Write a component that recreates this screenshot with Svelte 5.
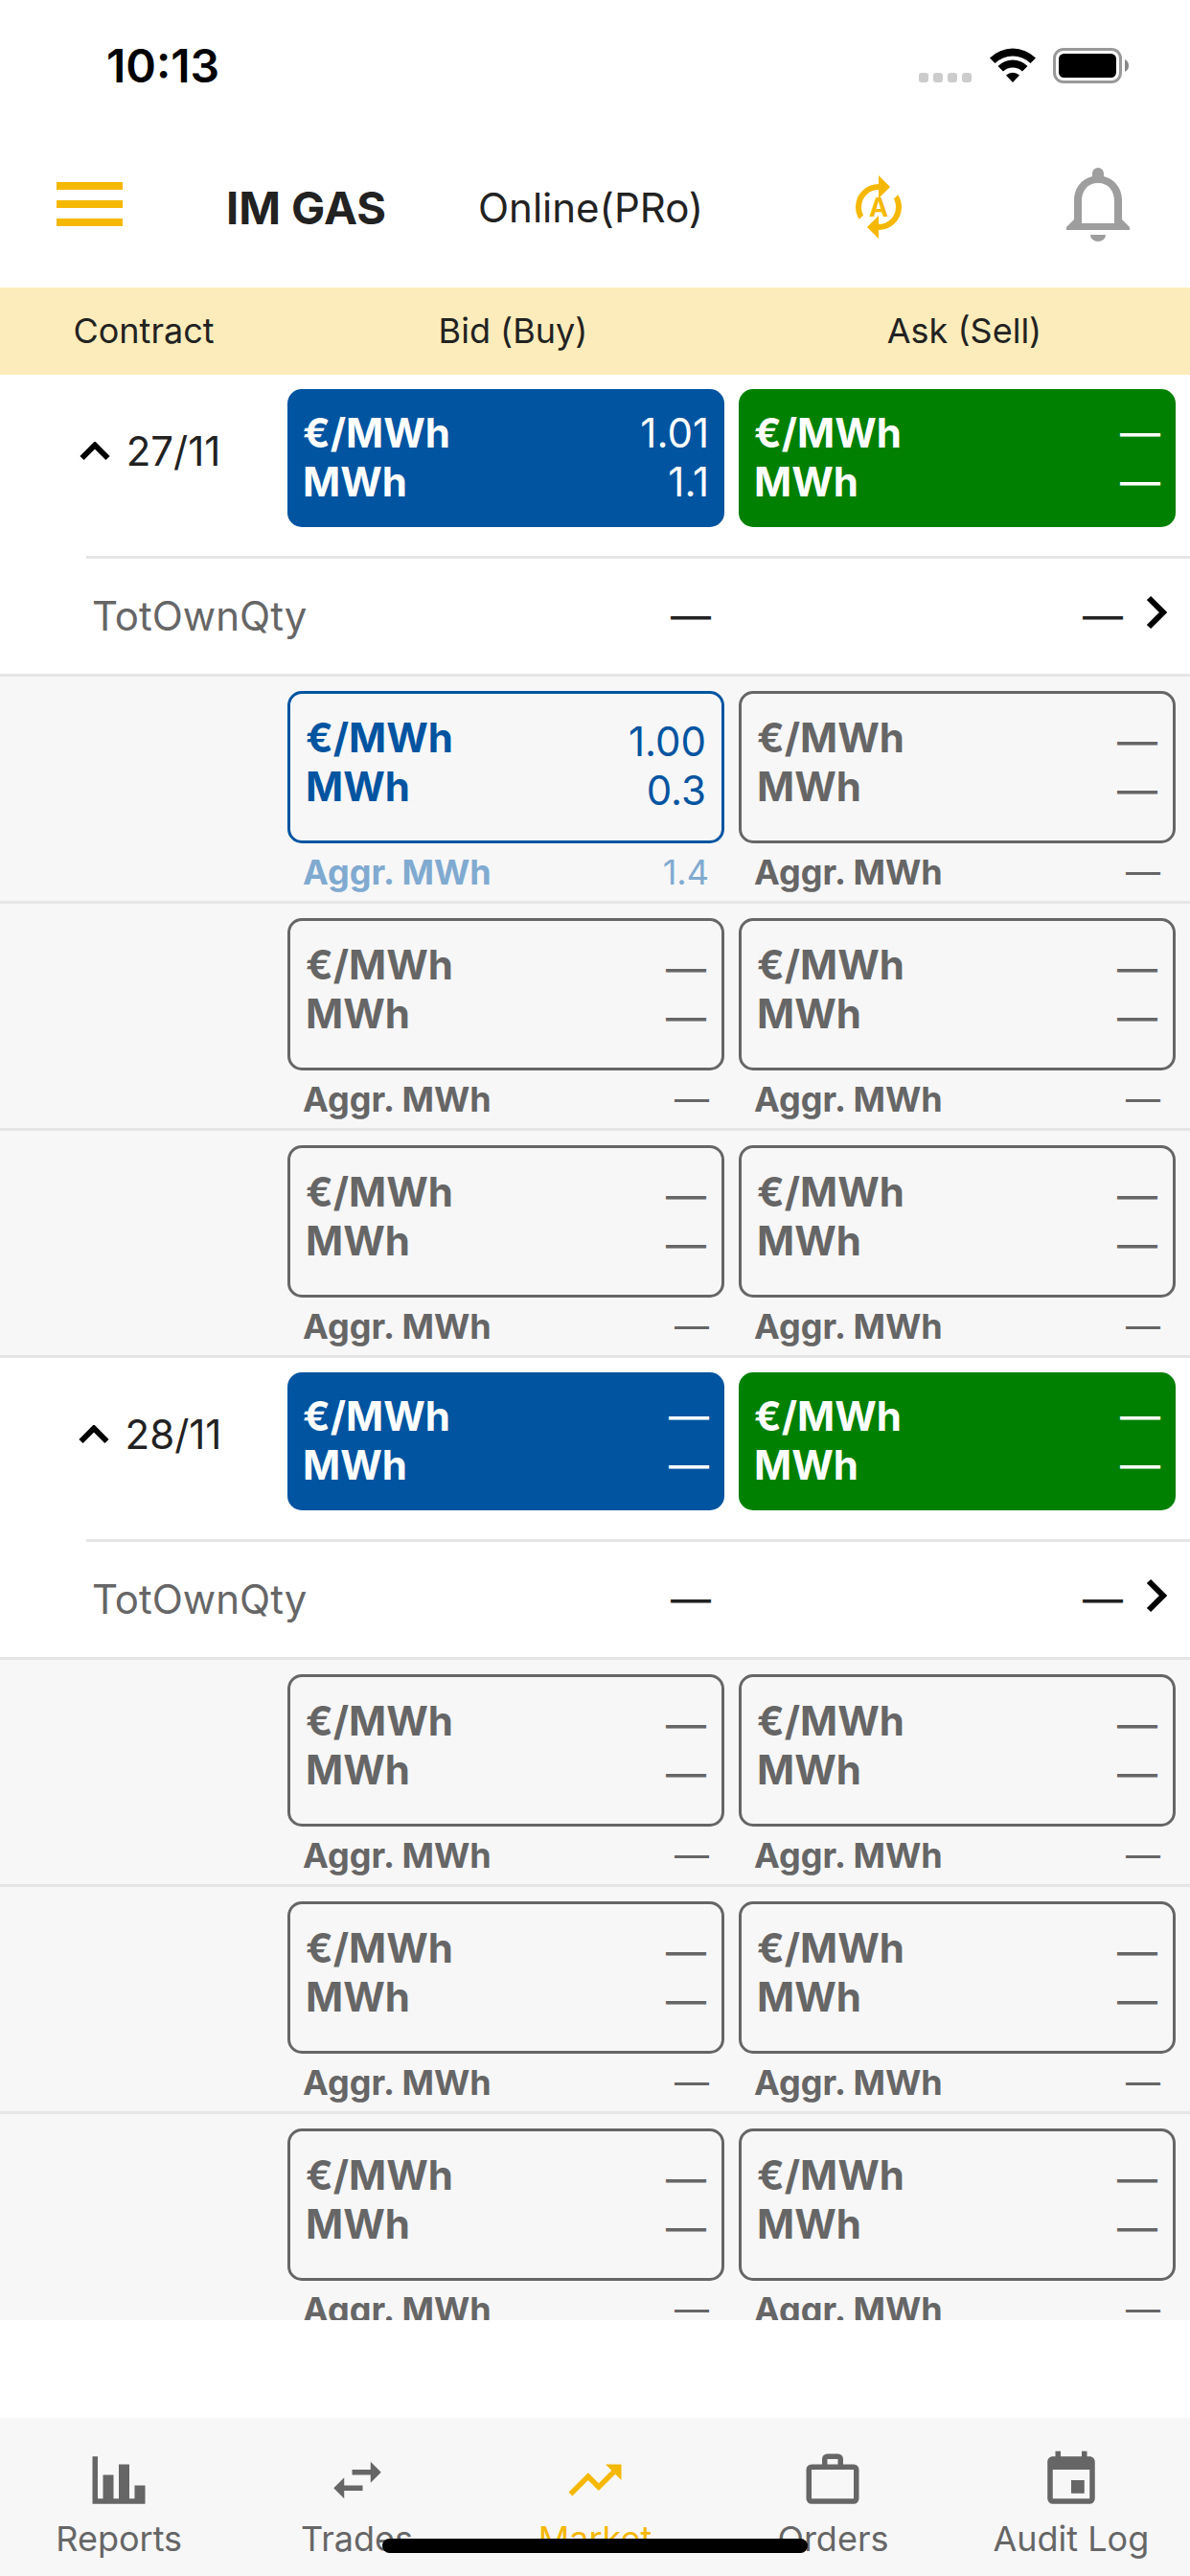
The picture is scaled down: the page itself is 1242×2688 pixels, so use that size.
<div class="app">
  <div class="status-bar">
    <span class="time">10:13</span>
    <div class="status-icons">
      <svg width="56" height="37" viewBox="0 0 56 37" fill="#ccc">
        {#each [0, 15, 30, 45] as x}
          <rect {x} y="26" width="10" height="10" rx="3" />
        {/each}
      </svg>
      <svg width="48" height="37" viewBox="0 0 48 37">
        <path d="M0 10.5A34 34 0 0 1 48 10.5L42.5 16A26.5 26.5 0 0 0 5.5 16Z" />
        <path d="M8.5 19A22 22 0 0 1 39.5 19L34 24.5A14.5 14.5 0 0 0 14 24.5Z" />
        <path d="M17 28.5A10.5 10.5 0 0 1 31 28.5L24 36Z" />
      </svg>
      <svg width="80" height="37" viewBox="0 0 80 37">
        <rect x="1.5" y="1.5" width="69" height="34" rx="9.5" fill="none" stroke="#999" stroke-width="3" />
        <rect x="6" y="6" width="60" height="25" rx="5.5" />
        <path d="M75 12Q79 14 79 18.5Q79 23 75 25Z" fill="#888" />
      </svg>
    </div>
  </div>

  <header class="toolbar">
    <button class="icon-btn menu" aria-label="Menu">
      <svg width="69" height="46" viewBox="0 0 69 46" fill="#f5b800">
        <path d="M0 0H69V8H0ZM0 19H69V27H0ZM0 38H69V46H0Z" />
      </svg>
    </button>
    <h1>IM GAS</h1>
    <span class="connection">Online(PRo)</span>
    <button class="icon-btn" aria-label="Auto refresh">
      <svg width="72" height="72" viewBox="0 0 24 24" fill="#f5b800">
        <path d="M12 6V9L16 5L12 1V4A8 8 0 0 0 4 12C4 13.57 4.46 15.03 5.24 16.26L6.7 14.8C6.25 13.97 6 13 6 12A6 6 0 0 1 12 6M18.76 7.74L17.3 9.2C17.74 10.04 18 11 18 12A6 6 0 0 1 12 18V15L8 19L12 23V20A8 8 0 0 0 20 12C20 10.43 19.54 8.97 18.76 7.74Z" />
        <text x="12" y="15.2" text-anchor="middle" class="auto-letter">A</text>
      </svg>
    </button>
    <button class="icon-btn bell" aria-label="Notifications">
      <svg width="66" height="77" viewBox="0 0 66 77" fill="#9e9e9e">
        <path fill-rule="evenodd" d="M27 9V6A6 6 0 0 1 39 6V9C51 12 58 22 58 34V54L66 62V65H0V62L8 54V34C8 22 15 12 27 9ZM33 16C22 16 16 24 16 35V58H50V35C50 24 44 16 33 16Z" />
        <path d="M25 70H41A8 7 0 0 1 25 70Z" />
      </svg>
    </button>
  </header>

  <main>
    <table>
      <thead>
        <tr>
          <th>Contract</th>
          <th>Bid (Buy)</th>
          <th>Ask (Sell)</th>
        </tr>
      </thead>
      {#each contracts as contract}
        <tbody>
          <tr class="summary">
            <th scope="row">
              <button class="toggle" aria-expanded={contract.open} on:click={() => toggle(contract)}>
                <svg width="32" height="20" viewBox="0 0 32 20" class:closed={!contract.open}>
                  <path d="M2.5 17L16 3.5L29.5 17" fill="none" stroke="#000" stroke-width="6" />
                </svg>
                {contract.name}
              </button>
            </th>
            {#each ['bid', 'ask'] as side}
              <td>
                <button class="card {side}">
                  <span class="labels">€/MWh<br>MWh</span>
                  <span class="values">{contract[side].price}<br>{contract[side].qty}</span>
                </button>
              </td>
            {/each}
          </tr>
          <tr class="total">
            <th scope="row">TotOwnQty</th>
            <td>—</td>
            <td>
              —
              <button class="icon-btn details" aria-label="Details for {contract.name}">
                <svg width="24" height="36" viewBox="0 0 24 36">
                  <path d="M3 3L18 18L3 33" fill="none" stroke="#000" stroke-width="6" />
                </svg>
              </button>
            </td>
          </tr>
          {#if contract.open}
            {#each contract.depth as level}
              <tr class="level">
                <th></th>
                {#each [level.bid, level.ask] as quote}
                  <td class:own={quote.own}>
                    <button class="card outline">
                      <span class="labels">€/MWh<br>MWh</span>
                      <span class="values">{quote.price}<br>{quote.qty}</span>
                    </button>
                    <div class="aggregate">
                      <b>Aggr. MWh</b>
                      <span>{quote.aggr}</span>
                    </div>
                  </td>
                {/each}
              </tr>
            {/each}
          {/if}
        </tbody>
      {/each}
    </table>
  </main>

  <nav>
    {#each tabs as tab}
      <a href="#{tab.id}" class:active={tab.id === active} on:click={() => active = tab.id}>
        <svg width="66" height="66" viewBox="0 0 24 24" fill="currentColor">
          <path d={tab.icon} />
        </svg>
        {tab.label}
      </a>
    {/each}
    <div class="home-indicator"></div>
  </nav>
</div>

<script>
const empty = { price: '—', qty: '—', aggr: '—' }
const emptyLevel = { bid: empty, ask: empty }

let active = 'market'
let contracts = [
  {
    name: '27/11',
    open: true,
    bid: { price: '1.01', qty: '1.1' },
    ask: empty,
    depth: [
      { bid: { price: '1.00', qty: '0.3', aggr: '1.4', own: true }, ask: empty },
      emptyLevel,
      emptyLevel,
    ],
  },
  {
    name: '28/11',
    open: true,
    bid: empty,
    ask: empty,
    depth: [emptyLevel, emptyLevel, emptyLevel],
  },
]

const tabs = [
  {
    id: 'reports',
    label: 'Reports',
    icon: 'M22 21H2V3H4V19H6V10H10V19H12V6H16V19H18V14H22V21Z',
  },
  {
    id: 'trades',
    label: 'Trades',
    icon: 'M6.99 11L3 15L6.99 19V16H14V14H6.99V11ZM21 9L17.01 5V8H10V10H17.01V13L21 9Z',
  },
  {
    id: 'market',
    label: 'Market',
    icon: 'M16 6L18.29 8.29L13.41 13.17L9.41 9.17L2 16.59L3.41 18L9.41 12L13.41 16L19.71 9.71L22 12V6H16Z',
  },
  {
    id: 'orders',
    label: 'Orders',
    icon: 'M20 6A2 2 0 0 1 22 8V19A2 2 0 0 1 20 21H4A2 2 0 0 1 2 19V8A2 2 0 0 1 4 6H8V4A2 2 0 0 1 10 2H14A2 2 0 0 1 16 4V6H20M4 8V19H20V8H4M14 6V4H10V6H14Z',
  },
  {
    id: 'audit-log',
    label: 'Audit Log',
    icon: 'M19 19H5V8H19M16 1V3H8V1H6V3H5C3.89 3 3 3.89 3 5V19A2 2 0 0 0 5 21H19A2 2 0 0 0 21 19V5C21 3.89 20.1 3 19 3H18V1M17 12H12V17H17V12Z',
  },
]

function toggle(contract) {
  contract.open = !contract.open
  contracts = contracts
}
</script>

<style>
:global(body) {
  margin: 0;
}
.app {
  display: flex;
  flex-direction: column;
  height: 100vh;
  font-family: Inter, 'Liberation Sans', sans-serif;
  font-size: 42px;
  line-height: 51px;
  color: #222;
  background: #fff;
}
svg {
  display: block;
  flex: none;
}
button {
  margin: 0;
  padding: 0;
  border: 0;
  background: none;
  font: inherit;
  color: inherit;
  cursor: pointer;
}
th, td {
  padding: 0;
  font-weight: 400;
}

.status-bar {
  display: flex;
  justify-content: space-between;
  align-items: center;
  height: 132px;
  padding: 0 63px 0 111px;
}
.time {
  padding-top: 4px;
  font-size: 48px;
  font-weight: 600;
  color: #000;
}
.status-icons {
  display: flex;
  gap: 18px;
  padding-top: 4px;
}

.toolbar {
  display: grid;
  grid-template-columns: 236fr 263fr 382fr 232fr 129fr;
  align-items: center;
  height: 168px;
}
.menu {
  margin-left: 59px;
  padding-bottom: 6px;
}
.bell {
  padding-bottom: 6px;
}
.icon-btn {
  justify-self: start;
}
.auto-letter {
  font-size: 9px;
  font-weight: 700;
}
h1 {
  margin: 0;
  font-size: 47px;
  font-weight: 700;
  white-space: nowrap;
}

main {
  flex: 1;
  min-height: 0;
  margin-bottom: 102px;
  overflow-y: auto;
  scrollbar-width: none;
}
table, tbody, thead {
  display: block;
}
tr {
  display: grid;
  grid-template-columns: 300px 1fr 1fr;
}
thead {
  position: sticky;
  top: 0;
  z-index: 1;
  background: #fdecbb;
}
thead th {
  font-size: 36px;
  line-height: 91px;
}

.summary th {
  display: flex;
  justify-content: center;
  height: 159px;
  padding-left: 13px;
}
.toggle {
  display: flex;
  align-items: center;
  gap: 17px;
}
.closed {
  transform: rotate(180deg);
}
.summary td {
  padding: 15px 15px 30px 0;
}
.card {
  display: flex;
  justify-content: space-between;
  width: 100%;
  padding: 20px 16px 22px;
  border-radius: 15px;
  color: #fff;
}
.labels {
  font-weight: 700;
  text-align: left;
}
.values {
  text-align: right;
}
.bid {
  background: #0054a0;
}
.ask {
  background: #008000;
}

.total {
  grid-template-columns: 210px 1fr 1fr;
  padding-left: 90px;
  border-bottom: 3px solid #e5e5e5;
}
.total th, .total td {
  display: flex;
  align-items: center;
  justify-content: flex-end;
  box-sizing: border-box;
  height: 123px;
  padding: 0 29px 2px 0;
  border-top: 3px solid #e5e5e5;
}
.total th {
  justify-content: flex-start;
  padding: 0 0 2px 6px;
  color: #666;
}
.total td:last-child {
  padding-right: 22px;
}
.details {
  padding: 0 0 6px 24px;
}

.level {
  border-bottom: 3px solid #e5e5e5;
  color: #666;
  background: #f7f7f7;
}
.level td {
  padding: 15px 15px 8px 0;
}
.outline {
  padding-bottom: 27px;
  border: 3px solid #666;
  color: #666;
}
.outline .values {
  padding-top: 4px;
}
.aggregate {
  display: flex;
  justify-content: space-between;
  padding: 8px 16px 0;
  font-size: 36px;
  line-height: 44px;
}
.aggregate b {
  font-weight: 700;
}
.own .card {
  border-color: #0054a0;
  color: #0054a0;
}
.own .aggregate {
  color: #80aad0;
}

nav {
  position: relative;
  display: flex;
  height: 165px;
  background: #f7f7f7;
}
nav a {
  display: flex;
  flex: 1;
  flex-direction: column;
  align-items: center;
  gap: 6px;
  padding-top: 32px;
  font-size: 36px;
  line-height: 44px;
  color: #666;
  text-decoration: none;
}
nav a.active {
  color: #f5b800;
}
.home-indicator {
  position: absolute;
  bottom: 24px;
  left: 50%;
  width: 444px;
  height: 15px;
  margin-left: -222px;
  border-radius: 8px;
  background: #000;
}
</style>
